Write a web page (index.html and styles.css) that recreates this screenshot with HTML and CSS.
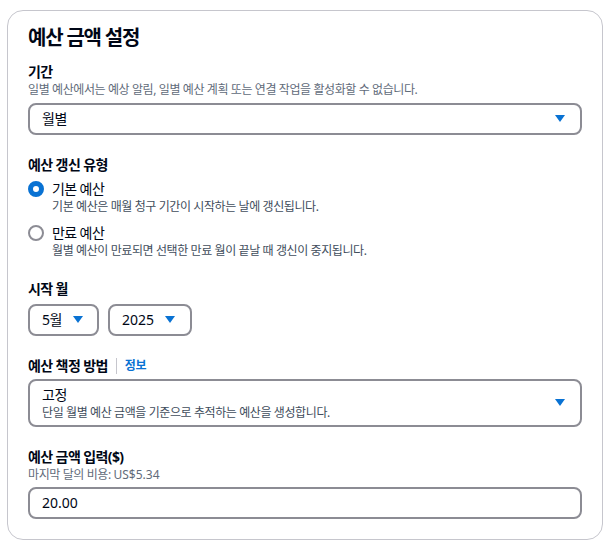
FILE: index.html
```html
<!DOCTYPE html>
<html lang="ko">
<head>
<meta charset="utf-8">
<link rel="stylesheet" href="styles.css">
</head>
<body>
<div class="panel">
  <h2 class="title">예산 금액 설정</h2>

  <div class="field">
    <div class="label">기간</div>
    <div class="desc">일별 예산에서는 예상 알림, 일별 예산 계획 또는 연결 작업을 활성화할 수 없습니다.</div>
    <div class="select wide">
      <span class="value">월별</span>
      <svg class="caret" width="10" height="8" viewBox="0 0 10 8"><path d="M0 0H10L5 7Z" fill="#0972d3"/></svg>
    </div>
  </div>

  <div class="field">
    <div class="label">예산 갱신 유형</div>
    <div class="radios">
      <div class="radio">
        <span class="dot on"></span>
        <div>
          <div class="rlabel">기본 예산</div>
          <div class="desc">기본 예산은 매월 청구 기간이 시작하는 날에 갱신됩니다.</div>
        </div>
      </div>
      <div class="radio">
        <span class="dot"></span>
        <div>
          <div class="rlabel">만료 예산</div>
          <div class="desc">월별 예산이 만료되면 선택한 만료 월이 끝날 때 갱신이 중지됩니다.</div>
        </div>
      </div>
    </div>
  </div>

  <div class="field">
    <div class="label">시작 월</div>
    <div class="row">
      <div class="select small month">
        <span class="value">5월</span>
        <svg class="caret" width="10" height="8" viewBox="0 0 10 8"><path d="M0 0H10L5 7Z" fill="#0972d3"/></svg>
      </div>
      <div class="select small year">
        <span class="value num">2025</span>
        <svg class="caret" width="10" height="8" viewBox="0 0 10 8"><path d="M0 0H10L5 7Z" fill="#0972d3"/></svg>
      </div>
    </div>
  </div>

  <div class="field">
    <div class="label">예산 책정 방법<span class="sep"></span><span class="info">정보</span></div>
    <div class="select wide tall">
      <div>
        <div class="value">고정</div>
        <div class="desc">단일 월별 예산 금액을 기준으로 추적하는 예산을 생성합니다.</div>
      </div>
      <svg class="caret" width="10" height="8" viewBox="0 0 10 8"><path d="M0 0H10L5 7Z" fill="#0972d3"/></svg>
    </div>
  </div>

  <div class="field last">
    <div class="label">예산 금액 입력($)</div>
    <div class="desc">마지막 달의 비용: <span class="num">US$5.34</span></div>
    <div class="input">20.00</div>
  </div>
</div>
</body>
</html>
```

FILE: styles.css
```css
* { box-sizing: border-box; }
html, body { margin: 0; padding: 0; background: #fff; }
body {
  font-family: "Noto Sans", "Noto Sans CJK KR", sans-serif;
  color: #000716;
  padding: 10px 9px 0 7px;
}
.panel {
  border: 1px solid #c6c6cd;
  border-radius: 16px;
  padding: 13px 20px 20px 20px;
  width: 596px;
  height: 530px;
}
.title {
  margin: 0;
  font-size: 20px;
  line-height: 28px;
  font-weight: 700;
  letter-spacing: -1.2px;
}
.field { margin-top: 10px; }
.field + .field { margin-top: 20px; }
.label {
  font-size: 14px;
  line-height: 20px;
  height: 20px;
  font-weight: 700;
  display: flex;
  align-items: center;
  letter-spacing: -0.6px;
}
.desc {
  font-size: 12px;
  line-height: 16px;
  color: #5f6b7a;
  letter-spacing: -0.4px;
}
.num { letter-spacing: 0; }
.select {
  margin-top: 5px;
  border: 2px solid #8c8c94;
  border-radius: 8px;
  display: flex;
  align-items: center;
  justify-content: space-between;
  font-size: 14px;
  line-height: 20px;
  letter-spacing: -0.5px;
}
.select .desc { color: #414d5c; }
.select.wide { height: 32px; padding: 0 15px 0 12px; }
.select.tall { height: 48px; margin-top: 3px; }
.select.small { height: 32px; padding: 0 14px 0 12px; margin-top: 0; }
.select.month { width: 71px; }
.select.year { width: 84px; padding-right: 15px; }
.row { display: flex; gap: 9px; margin-top: 5px; }
.caret { display: block; flex: none; }
.radios { margin-top: 4px; display: flex; flex-direction: column; gap: 8px; }
.radio { display: flex; gap: 8px; align-items: flex-start; }
.radio .desc { color: #414d5c; }
.dot {
  width: 16px; height: 16px; border-radius: 50%;
  border: 2px solid #8c8c94;
  margin-top: 2px;
  flex: none;
}
.dot.on { border: 5px solid #0972d3; }
.rlabel { font-size: 14px; line-height: 20px; letter-spacing: -0.6px; }
.sep {
  display: inline-block;
  width: 1px; height: 16px;
  background: #c6c6cd;
  margin: 0 8px 0 8px;
}
.info { color: #0972d3; font-size: 12px; font-weight: 700; letter-spacing: -0.3px; }
.input {
  margin-top: 4px;
  height: 32px;
  border: 2px solid #8c8c94;
  border-radius: 8px;
  padding: 0 12px;
  font-size: 14px;
  line-height: 28px;
}
```
